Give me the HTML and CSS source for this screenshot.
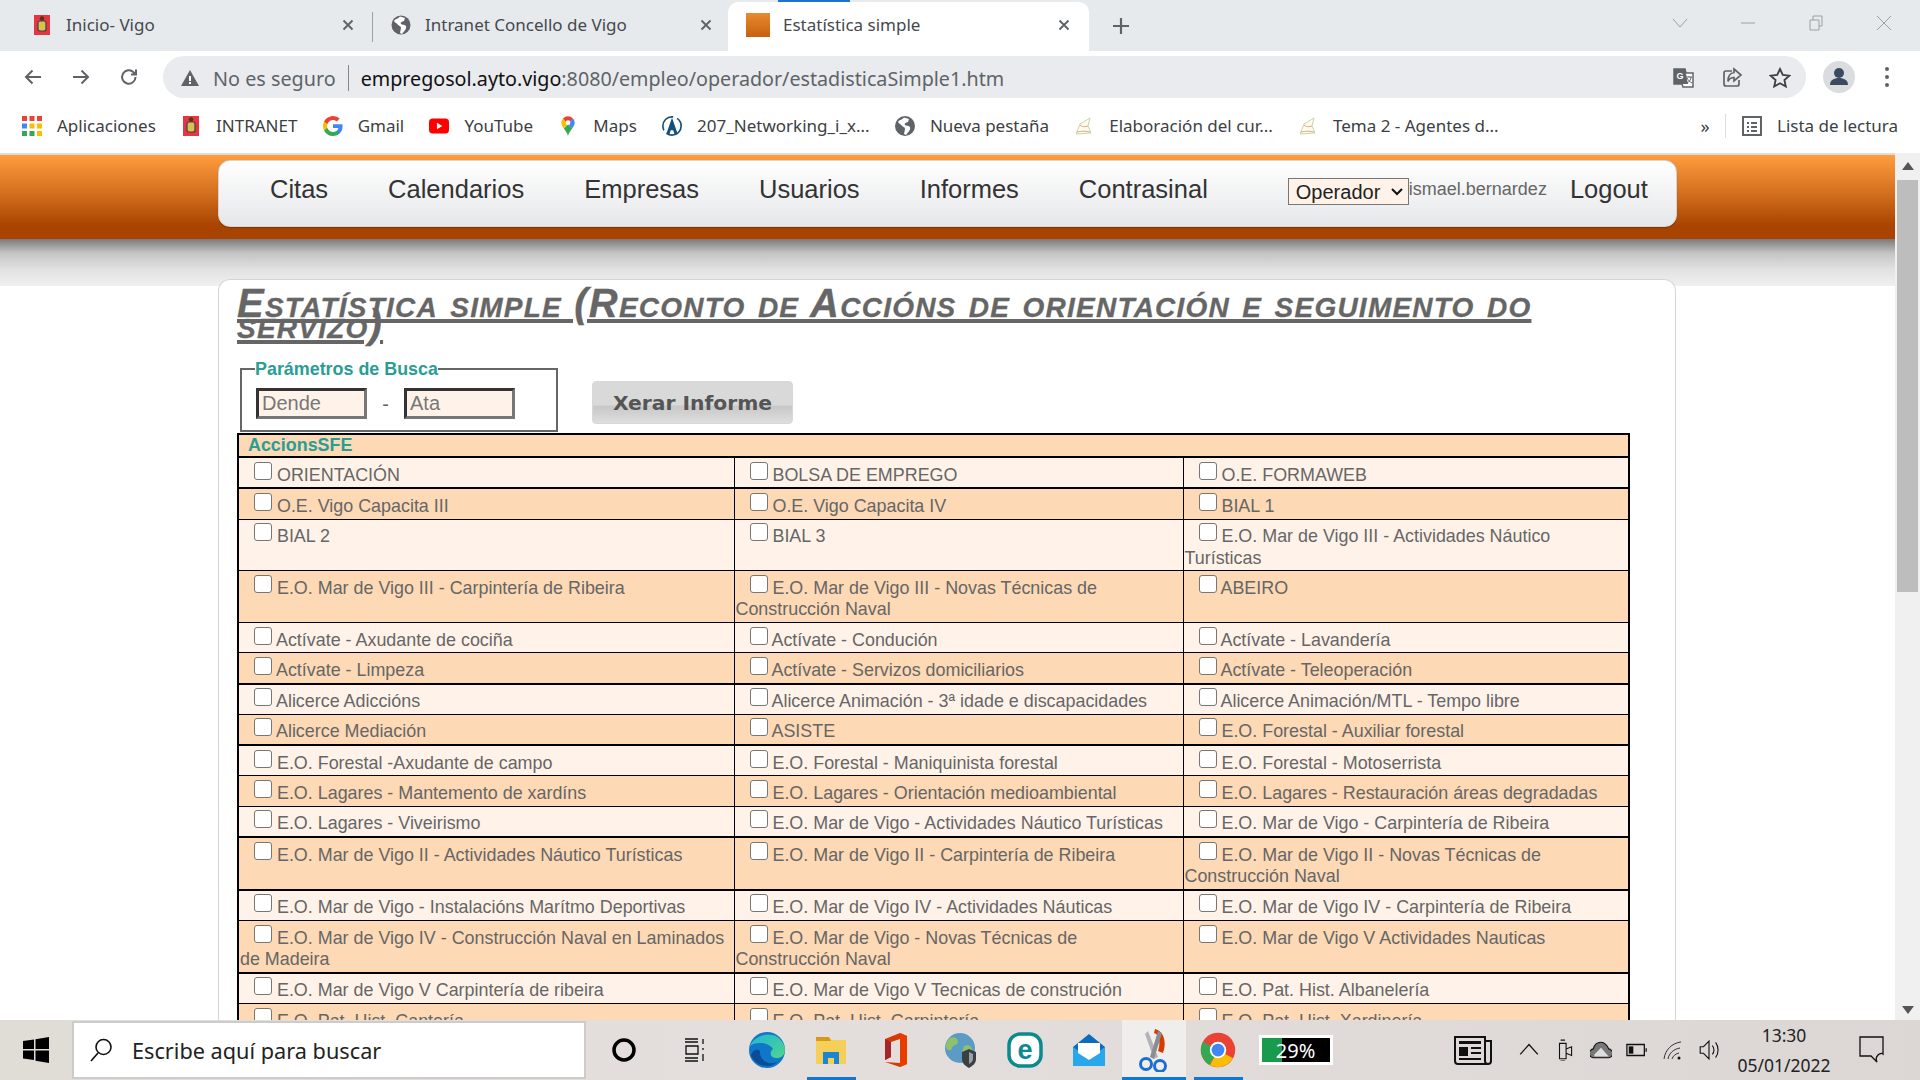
FILE: index.html
```html
<!DOCTYPE html>
<html lang="gl">
<head>
<meta charset="utf-8">
<title>Estatística simple</title>
<link rel="stylesheet" href="styles.css">
</head>
<body>
<div class="screen">
  <div class="tabs">
    <div class="tab">
      <svg class="fav" viewBox="0 0 20 20"><rect x="2" y="0" width="16" height="20" fill="#e8343f"/><rect x="6" y="6" width="8" height="10" rx="2" fill="#d9c24a" stroke="#345" stroke-width="1.2"/><circle cx="10" cy="3.5" r="2.2" fill="#532"/></svg>
      <span class="tab-title">Inicio- Vigo</span>
      <svg class="tab-x" viewBox="0 0 12 12"><path d="M1.5 1.5l9 9M10.5 1.5l-9 9"/></svg>
    </div>
    <div class="tab tab-sep">
      <svg class="fav" viewBox="0 0 20 20"><circle cx="10" cy="10" r="9.5" fill="#5f6368"/><path d="M9 1.5C7 4 4 4 3 6c1 2 3 2 4 4 1 1 3 1 3 3l-1 5 2 1c2-3 5-5 4-8-2-2-4-1-5-2-1-2 1-2 3-3l1-3z" fill="#fff"/></svg>
      <span class="tab-title">Intranet Concello de Vigo</span>
      <svg class="tab-x" viewBox="0 0 12 12"><path d="M1.5 1.5l9 9M10.5 1.5l-9 9"/></svg>
    </div>
    <div class="tab tab-on">
      <i class="tab-progress"></i>
      <svg class="fav fav-wide" viewBox="0 0 24 24"><defs><linearGradient id="og" x1="0" y1="0" x2="0" y2="1"><stop offset="0" stop-color="#e88a30"/><stop offset="1" stop-color="#c8600e"/></linearGradient></defs><rect width="24" height="24" fill="url(#og)"/></svg>
      <span class="tab-title">Estatística simple</span>
      <svg class="tab-x" viewBox="0 0 12 12"><path d="M1.5 1.5l9 9M10.5 1.5l-9 9"/></svg>
    </div>
    <svg class="newtab" viewBox="0 0 18 18"><path d="M9 1v16M1 9h16"/></svg>
    <div class="winctl">
      <svg viewBox="0 0 16 16"><path d="M1 4l7 8 7-8"/></svg>
      <svg viewBox="0 0 16 16"><path d="M1 8h14"/></svg>
      <svg viewBox="0 0 16 16"><path d="M2 5h9v10H2zM5 5V1h9v10h-3"/></svg>
      <svg viewBox="0 0 16 16"><path d="M1 1l14 14M15 1L1 15"/></svg>
    </div>
  </div>

  <div class="toolbar">
    <svg class="tool" viewBox="0 0 20 20"><path d="M18 10H3M9.5 3.5L3 10l6.500 6.500"/></svg>
    <svg class="tool" viewBox="0 0 20 20"><path d="M2 10h15M10.500 3.500L17 10l-6.500 6.500"/></svg>
    <svg class="tool" viewBox="0 0 20 20"><path d="M16.500 10a6.700 6.700 0 1 1-2-4.800L17 7.500M17 2.500v5h-5"/></svg>
    <div class="omni">
      <svg class="warn" viewBox="0 0 18 16"><path d="M9 0l9 16H0z" fill="#5f6368"/><path d="M8 6h2v5H8zM8 12h2v2H8z" fill="#fff"/></svg>
      <span class="insecure">No es seguro</span>
      <i class="omni-sep"></i>
      <span class="url"><b>empregosol.ayto.vigo</b>:8080/empleo/operador/estadisticaSimple1.htm</span>
      <span class="omni-icons">
        <svg viewBox="0 0 22 22"><path d="M1 2h11l1 4h7v14H10l-1-3H1z" fill="#fff" stroke="#5f6368" stroke-width="1.500"/><path d="M1 2h11l3 15H1z" fill="#5f6368"/><text x="3.500" y="12" class="g-mark">G</text><path d="M13 10h6M16 9v1M14 16c2-1 4-3 4-6M14 11c1 2 3 4 5 5" stroke="#5f6368" fill="none"/></svg>
        <svg viewBox="0 0 22 22"><path d="M11 4H5a2 2 0 0 0-2 2v11a2 2 0 0 0 2 2h11a2 2 0 0 0 2-2v-4M13 2l7 6-7 6v-3.500c-3 0-5 1.500-6 4 0-5 2-8.500 6-9z" fill="none" stroke="#5f6368" stroke-width="1.700"/></svg>
        <svg viewBox="0 0 22 22"><path d="M11 2l2.800 6 6.500.700-4.900 4.300 1.400 6.500-5.800-3.300-5.800 3.300 1.400-6.500L1.700 8.700 8.200 8z" fill="none" stroke="#3c4043" stroke-width="1.800"/></svg>
      </span>
    </div>
    <svg class="avatar" viewBox="0 0 32 32"><circle cx="16" cy="16" r="16" fill="#dadce0"/><circle cx="16" cy="12" r="5" fill="#3c4a60"/><path d="M7 24c0-5 4-7 9-7s9 2 9 7z" fill="#3c4a60"/></svg>
    <svg class="kebab" viewBox="0 0 6 22"><circle cx="3" cy="3" r="2"/><circle cx="3" cy="11" r="2"/><circle cx="3" cy="19" r="2"/></svg>
  </div>

  <div class="bookmarks">
    <span class="bm"><svg class="bi" viewBox="0 0 20 20"><path fill="#ea4335" d="M0 0h5v5H0zM7.500 0h5v5h-5zM15 0h5v5h-5z"/><path fill="#fbbc04" d="M15 7.500h5v5h-5zM7.500 7.500h5v5h-5z"/><path fill="#4285f4" d="M0 7.500h5v5H0z"/><path fill="#34a853" d="M0 15h5v5H0zM7.500 15h5v5h-5z"/><path fill="#fbbc04" d="M15 15h5v5h-5z"/></svg>Aplicaciones</span>
    <span class="bm"><svg class="bi" viewBox="0 0 20 20"><rect x="2" y="0" width="16" height="20" fill="#e8343f"/><rect x="6" y="6" width="8" height="10" rx="2" fill="#d9c24a" stroke="#345" stroke-width="1.200"/><circle cx="10" cy="3.500" r="2.200" fill="#532"/></svg>INTRANET</span>
    <span class="bm"><svg class="bi" viewBox="0 0 20 20"><path fill="#4285f4" d="M19.600 10.200c0-.7-.1-1.400-.2-2H10v3.800h5.400a4.600 4.600 0 0 1-2 3v2.500h3.200c1.900-1.700 3-4.300 3-7.300z"/><path fill="#34a853" d="M10 20c2.700 0 5-.9 6.600-2.500l-3.200-2.500c-.9.600-2 1-3.400 1-2.600 0-4.800-1.800-5.600-4.100H1.100v2.600A10 10 0 0 0 10 20z"/><path fill="#fbbc04" d="M4.400 11.900a6 6 0 0 1 0-3.800V5.500H1.100a10 10 0 0 0 0 9z"/><path fill="#ea4335" d="M10 4c1.500 0 2.800.5 3.800 1.500l2.900-2.900A10 10 0 0 0 1.100 5.500l3.300 2.600C5.200 5.800 7.400 4 10 4z"/></svg>Gmail</span>
    <span class="bm"><svg class="bi bi-yt" viewBox="0 0 24 18"><rect width="24" height="18" rx="4.500" fill="#f00"/><path d="M9.500 5l6.500 4-6.500 4z" fill="#fff"/></svg>YouTube</span>
    <span class="bm"><svg class="bi" viewBox="0 0 16 24"><path fill="#34a853" d="M8 24c-1-4-3-6-5-9l5-5 5 5c-2 3-4 5-5 9z"/><path fill="#fbbc04" d="M3 15C1 12 0 10 0 8c0-2 1-4 2-5l6 7z"/><path fill="#4285f4" d="M13 15c2-3 3-5 3-7 0-2-1-4-2-5L8 10z"/><path fill="#ea4335" d="M2 3a8 8 0 0 1 12 0L8 10z"/><circle cx="8" cy="8" r="2.800" fill="#fff"/></svg>Maps</span>
    <span class="bm"><svg class="bi" viewBox="0 0 24 24"><circle cx="12" cy="12" r="11" fill="none" stroke="#14507c" stroke-width="2" stroke-dasharray="24 5"/><path d="M12 2l7 20h-4l-1.500-5h-3L9 22H5z" fill="#14507c"/></svg>207_Networking_i_x...</span>
    <span class="bm"><svg class="bi" viewBox="0 0 20 20"><circle cx="10" cy="10" r="10" fill="#5f6368"/><path d="M9 1.500C7 4 4 4 3 6c1 2 3 2 4 4 1 1 3 1 3 3l-1 5 2 1c2-3 5-5 4-8-2-2-4-1-5-2-1-2 1-2 3-3l1-3z" fill="#fff"/></svg>Nueva pestaña</span>
    <span class="bm"><svg class="bi" viewBox="0 0 20 20"><path d="M2 18L6 8l10-6-2 8 3 7z" fill="#fbfbf2" stroke="#c9d6a8"/><path d="M3 16c4-1 9-1 13 0M6 9c2 2 5 2 8 1" stroke="#e8a878" fill="none"/></svg>Elaboración del cur...</span>
    <span class="bm"><svg class="bi" viewBox="0 0 20 20"><path d="M2 18L6 8l10-6-2 8 3 7z" fill="#fbfbf2" stroke="#c9d6a8"/><path d="M3 16c4-1 9-1 13 0M6 9c2 2 5 2 8 1" stroke="#e8a878" fill="none"/></svg>Tema 2 - Agentes d...</span>
    <span class="bm-more">»</span>
    <i class="bm-sep"></i>
    <span class="bm bm-read"><svg class="bi" viewBox="0 0 20 20"><rect x="1" y="1" width="18" height="18" fill="none" stroke="#5f6368" stroke-width="2"/><path d="M5 6h2v2H5zM9 6h6v2H9zM5 10h2v2H5zM9 10h6v2H9zM5 14h2v2H5zM9 14h6v2H9z" fill="#5f6368"/></svg>Lista de lectura</span>
  </div>

  <div class="viewport">
    <div class="content">
      <div class="hdr">
        <nav class="nav">
          <a>Citas</a><a>Calendarios</a><a>Empresas</a><a>Usuarios</a><a>Informes</a><a>Contrasinal</a>
          <select class="role"><option>Operador</option></select>
          <span class="user">ismael.bernardez</span>
          <a class="logout">Logout</a>
        </nav>
      </div>
      <div class="shade"></div>
      <main class="panel">
        <h1 class="title">Estatística simple (Reconto de Accións de orientación e seguimento do servizo)</h1>
        <div class="search">
          <fieldset class="params">
            <legend>Parámetros de Busca</legend>
            <input class="field" placeholder="Dende">
            <span class="dash">-</span>
            <input class="field" placeholder="Ata">
          </fieldset>
          <button class="gen">Xerar Informe</button>
        </div>
        <table class="grid">
          <colgroup><col class="c1"><col class="c2"><col class="c3"></colgroup>
          <tr class="band t"><th colspan="3">AccionsSFE</th></tr>
          <tr class="t"><td><label><input type="checkbox"> ORIENTACIÓN</label></td><td><label><input type="checkbox"> BOLSA DE EMPREGO</label></td><td><label><input type="checkbox"> O.E. FORMAWEB</label></td></tr>
          <tr class="band"><td><label><input type="checkbox"> O.E. Vigo Capacita III</label></td><td><label><input type="checkbox"> O.E. Vigo Capacita IV</label></td><td><label><input type="checkbox"> BIAL 1</label></td></tr>
          <tr><td><label><input type="checkbox"> BIAL 2</label></td><td><label><input type="checkbox"> BIAL 3</label></td><td><label><input type="checkbox"> E.O. Mar de Vigo III - Actividades Náutico Turísticas</label></td></tr>
          <tr class="band"><td><label><input type="checkbox"> E.O. Mar de Vigo III - Carpintería de Ribeira</label></td><td><label><input type="checkbox"> E.O. Mar de Vigo III - Novas Técnicas de Construcción Naval</label></td><td><label><input type="checkbox"> ABEIRO</label></td></tr>
          <tr><td><label><input type="checkbox"> Actívate - Axudante de cociña</label></td><td><label><input type="checkbox"> Actívate - Condución</label></td><td><label><input type="checkbox"> Actívate - Lavandería</label></td></tr>
          <tr class="band t"><td><label><input type="checkbox"> Actívate - Limpeza</label></td><td><label><input type="checkbox"> Actívate - Servizos domiciliarios</label></td><td><label><input type="checkbox"> Actívate - Teleoperación</label></td></tr>
          <tr><td><label><input type="checkbox"> Alicerce Adiccións</label></td><td><label><input type="checkbox"> Alicerce Animación - 3ª idade e discapacidades</label></td><td><label><input type="checkbox"> Alicerce Animación/MTL - Tempo libre</label></td></tr>
          <tr class="band t"><td><label><input type="checkbox"> Alicerce Mediación</label></td><td><label><input type="checkbox"> ASISTE</label></td><td><label><input type="checkbox"> E.O. Forestal - Auxiliar forestal</label></td></tr>
          <tr><td><label><input type="checkbox"> E.O. Forestal -Axudante de campo</label></td><td><label><input type="checkbox"> E.O. Forestal - Maniquinista forestal</label></td><td><label><input type="checkbox"> E.O. Forestal - Motoserrista</label></td></tr>
          <tr class="band"><td><label><input type="checkbox"> E.O. Lagares - Mantemento de xardíns</label></td><td><label><input type="checkbox"> E.O. Lagares - Orientación medioambiental</label></td><td><label><input type="checkbox"> E.O. Lagares - Restauración áreas degradadas</label></td></tr>
          <tr class="t"><td><label><input type="checkbox"> E.O. Lagares - Viveirismo</label></td><td><label><input type="checkbox"> E.O. Mar de Vigo - Actividades Náutico Turísticas</label></td><td><label><input type="checkbox"> E.O. Mar de Vigo - Carpintería de Ribeira</label></td></tr>
          <tr class="band t"><td><label><input type="checkbox"> E.O. Mar de Vigo II - Actividades Náutico Turísticas</label></td><td><label><input type="checkbox"> E.O. Mar de Vigo II - Carpintería de Ribeira</label></td><td><label><input type="checkbox"> E.O. Mar de Vigo II - Novas Técnicas de Construcción Naval</label></td></tr>
          <tr><td><label><input type="checkbox"> E.O. Mar de Vigo - Instalacións Marítmo Deportivas</label></td><td><label><input type="checkbox"> E.O. Mar de Vigo IV - Actividades Náuticas</label></td><td><label><input type="checkbox"> E.O. Mar de Vigo IV - Carpintería de Ribeira</label></td></tr>
          <tr class="band t"><td><label><input type="checkbox"> E.O. Mar de Vigo IV - Construcción Naval en Laminados de Madeira</label></td><td><label><input type="checkbox"> E.O. Mar de Vigo - Novas Técnicas de Construcción Naval</label></td><td><label><input type="checkbox"> E.O. Mar de Vigo V Actividades Nauticas</label></td></tr>
          <tr><td><label><input type="checkbox"> E.O. Mar de Vigo V Carpintería de ribeira</label></td><td><label><input type="checkbox"> E.O. Mar de Vigo V Tecnicas de construción</label></td><td><label><input type="checkbox"> E.O. Pat. Hist. Albanelería</label></td></tr>
          <tr class="band"><td><label><input type="checkbox"> E.O. Pat. Hist. Cantería</label></td><td><label><input type="checkbox"> E.O. Pat. Hist. Carpintería</label></td><td><label><input type="checkbox"> E.O. Pat. Hist. Xardinería</label></td></tr>
        </table>
      </main>
    </div>
    <div class="scrollbar">
      <svg class="arrow" viewBox="0 0 12 8"><path d="M6 0l6 8H0z"/></svg>
      <div class="thumb"></div>
      <svg class="arrow" viewBox="0 0 12 8"><path d="M6 8l6-8H0z"/></svg>
    </div>
  </div>

  <footer class="taskbar">
    <svg class="start" viewBox="0 0 26 26"><path d="M0 4l11-1.500V12H0zM12.500 2.300L26 0v12H12.500zM0 13.500h11V23L0 21.500zM12.500 13.500H26V26l-13.500-2.200z" fill="#000"/></svg>
    <div class="search-box">
      <svg viewBox="0 0 24 24"><circle cx="14.500" cy="9" r="7.500" fill="none" stroke="#111" stroke-width="1.600"/><path d="M9 15l-7 8" stroke="#111" stroke-width="1.600"/></svg>
      <span>Escribe aquí para buscar</span>
    </div>
    <div class="apps">
      <span class="app app-sm app-cortana"><svg viewBox="0 0 24 24"><circle cx="12" cy="12" r="10" fill="none" stroke="#000" stroke-width="3.500"/></svg></span>
      <span class="app app-sm"><svg viewBox="0 0 24 24"><path d="M2 1h13M2 4h13M2 20h13M2 23h13M3 8h12v8H3zM20 1v5M20 10v2M20 16v7" fill="none" stroke="#111" stroke-width="1.300"/></svg></span>
      <span class="app app-edge"><svg viewBox="0 0 36 36"><defs><linearGradient id="eg" x1="0" y1="0" x2="1" y2="1"><stop offset="0" stop-color="#1fb6d8"/><stop offset="1" stop-color="#52d58a"/></linearGradient></defs><circle cx="18" cy="18" r="18" fill="#0f76c8"/><path d="M1 14C5 2 28-4 35 13c3 9-2 14-9 13-6-1-5-7-2-9-4-7-18-8-23-3z" fill="url(#eg)"/><path d="M11 19c-1 9 8 15 17 11-7 7-20 5-26-6 1-5 5-8 9-5z" fill="#0a4d96"/></svg></span>
      <span class="app bar"><svg viewBox="0 0 36 36"><path d="M3 5h13l3 3h14v24H3z" fill="#f6ce5a"/><path d="M3 5h13l2 4H3z" fill="#d79a18"/><path d="M10 32V20h16v12h-5v-6h-6v6z" fill="#1a86d0"/></svg></span>
      <span class="app"><svg viewBox="0 0 36 36"><path d="M7 7l15-6 7 3v28l-7 3-15-5 15 1V7l-9 3v15l-6 3z" fill="#d83b01"/><path d="M22 1l7 3v28l-7 3z" fill="#eb3c00"/><path d="M7 7v21l6-3V10z" fill="#a4262c"/></svg></span>
      <span class="app"><svg viewBox="0 0 36 36"><circle cx="18" cy="16" r="15" fill="#5b9bc4"/><path d="M8 6c4-2 8 0 8 4s-5 2-6 6-5 2-6 0 1-8 4-10zM22 14c4-2 8 0 8 4l-6 6-4-4z" fill="#8fc06c"/><path d="M20 20l7-3 7 3v7c0 5-4 7-7 9-3-2-7-4-7-9z" fill="#3a3f44"/><path d="M27 20l4 2v5c0 2-2 4-4 5z" fill="#9aa0a6"/></svg></span>
      <span class="app"><svg viewBox="0 0 36 36"><rect x="2" y="2" width="32" height="32" rx="11" fill="#fff" stroke="#0a8a8f" stroke-width="3.500"/><text x="18" y="27" class="eset">e</text></svg></span>
      <span class="app"><svg viewBox="0 0 36 36"><path d="M18 2l16 13v19H2V15z" fill="#0f6cbd"/><path d="M2 15l16 11 16-11v19H2z" fill="#28a8ea"/><path d="M7 11h22v10l-11 7-11-7z" fill="#fff"/></svg></span>
      <span class="app app-active"><svg viewBox="0 0 36 44"><path d="M19 1c9 2 12 14 8 24l-5-2c3-8 1-17-4-18z" fill="#d83b01"/><path d="M12 3l10 26-4 2L9 6z" fill="#b0b4b8"/><path d="M22 3l-8 26 4 2 8-26z" fill="#8a8e92"/><circle cx="10" cy="36" r="5.500" fill="none" stroke="#1a6fd0" stroke-width="3"/><circle cx="24" cy="38" r="5.500" fill="none" stroke="#1a6fd0" stroke-width="3"/></svg></span>
      <span class="app bar"><svg viewBox="0 0 48 48"><circle cx="24" cy="24" r="23" fill="#ea4335"/><path d="M24 24L44 35A23 23 0 0 1 13 44z" fill="#fbbc04"/><path d="M24 24L13 44A23 23 0 0 1 4 13z" fill="#34a853"/><circle cx="24" cy="24" r="11" fill="#fff"/><circle cx="24" cy="24" r="8.500" fill="#4285f4"/></svg></span>
      <span class="batt"><i class="batt-fill"></i><span class="batt-txt">29%</span></span>
    </div>
    <div class="tray">
      <svg class="tr-news" viewBox="0 0 38 30"><path d="M1 2h30v24a3 3 0 0 0 3 3H4a3 3 0 0 1-3-3zM31 6h6v20a3 3 0 0 1-3 3" fill="none" stroke="#111" stroke-width="2"/><path d="M5 6h22v3H5zM5 12h9v9H5zM17 12h10v2H17zM17 17h10v2H17zM5 23h22v2H5z" fill="#111"/></svg>
      <svg class="tr" viewBox="0 0 20 20"><path d="M2 14l8-9 8 9" fill="none" stroke="#111" stroke-width="1.200"/></svg>
      <svg class="tr" viewBox="0 0 20 20"><path d="M5 4h6v14H5zM11 9l5-2v8l-5-2M6 1h4M6 20h4" fill="none" stroke="#111"/></svg>
      <svg class="tr" viewBox="0 0 20 20"><path d="M4 17a4 4 0 0 1-1-8c1-4 4-6 7-6s6 3 7 6a4 4 0 0 1-1 8z" fill="#777" stroke="#111"/><path d="M4 14l6-6 7 8H4z" fill="#ddd"/></svg>
      <svg class="tr" viewBox="0 0 24 20"><path d="M1 4h19v12H1zM22 8v4" fill="none" stroke="#111" stroke-width="1.400"/><path d="M3 6h5v8H3z" fill="#111"/></svg>
      <svg class="tr" viewBox="0 0 22 20"><path d="M2 19C3 10 10 3 19 2M6 19c1-6 6-10 12-11M10 19c1-3 3-5 7-6" fill="none" stroke="#333"/><circle cx="17" cy="18" r="1.500" fill="#111"/></svg>
      <svg class="tr" viewBox="0 0 20 20"><path d="M2 7h3l5-5v16l-5-5H2zM13 6c2 2 2 6 0 8M16 3c3 4 3 10 0 14" fill="none" stroke="#111"/></svg>
    </div>
    <div class="clock"><span>13:30</span><span>05/01/2022</span></div>
    <svg class="notif" viewBox="0 0 26 28"><path d="M1 1h23v17c0 0-2-2-5 1s-1 7-1 7L12 20H1z" fill="none" stroke="#111" stroke-width="1.300"/></svg>
  </footer>
</div>
</body>
</html>
```
FILE: styles.css
```css
* { box-sizing: border-box; }
html, body { margin: 0; padding: 0; height: 100%; overflow: hidden; }
.screen { width: 1920px; height: 1080px; display: flex; flex-direction: column; overflow: hidden; font-family: "Liberation Sans", Arial, sans-serif; background: #fff; }

/* browser chrome */
.tabs { height: 51px; flex: none; background: #e7eaed; display: flex; align-items: flex-end; font-family: "Noto Sans", sans-serif; }
.tab { position: relative; width: 364px; height: 49px; display: flex; align-items: center; padding: 0 0 4px 32px; font-size: 17px; color: #45494e; }
.tab-sep { width: 365px; padding-left: 27px; }
.tab-sep::before { content: ""; position: absolute; left: 8px; top: 10px; width: 1px; height: 30px; background: #9aa0a6; }
.fav { width: 20px; height: 24px; flex: none; margin-right: 14px; }
.fav-wide { width: 24px; height: 24px; margin-right: 13px; }
.tab-title { flex: 1; white-space: nowrap; }
.tab-x { width: 12px; height: 12px; flex: none; margin-right: 10px; fill: none; stroke: #5f6368; stroke-width: 1.900; }
.tab-sep .tab-x { margin-right: 17px; }
.tab-on { width: 361px; background: #fff; border-radius: 10px 10px 0 0; padding-left: 18px; margin-left: -1px; }
.tab-progress { position: absolute; left: 50px; top: -2px; width: 72px; height: 2px; background: #1a73d0; }
.tab-on .tab-x { margin-right: 19px; }
.newtab { width: 18px; height: 18px; margin: 0 0 16px 23px; fill: none; stroke: #5f6368; stroke-width: 2.200; flex: none; }
.winctl { margin-left: auto; align-self: flex-start; display: flex; gap: 52px; padding: 15px 28px 0 0; }
.winctl svg { width: 16px; height: 16px; fill: none; stroke: #9aa0a6; stroke-width: 1; }

.toolbar { height: 52px; flex: none; background: #fff; display: flex; align-items: center; padding: 0 20px 0 23px; gap: 28px; font-family: "Noto Sans", sans-serif; }
.tool { width: 20px; height: 20px; flex: none; fill: none; stroke: #5f6368; stroke-width: 2; }
.omni { margin-left: -4px; width: 1643px; height: 42px; background: #e9ebee; border-radius: 21px; display: flex; align-items: center; padding: 2px 15px 0 18px; color: #5f6368; flex: none; }
.warn { width: 18px; height: 16px; flex: none; margin-right: 14px; }
.insecure { font-size: 19.800px; white-space: nowrap; }
.omni-sep { width: 1px; height: 26px; background: #80868b; margin: 0 12px; flex: none; }
.url { white-space: nowrap; font-size: 19.700px; }
.url b { font-weight: 400; color: #111; }
.omni-icons { margin-left: auto; display: flex; gap: 26px; }
.omni-icons svg { width: 22px; height: 22px; }
.g-mark { font: bold 9px "Liberation Sans", sans-serif; fill: #fff; }
.avatar { width: 32px; height: 32px; flex: none; margin-left: -11px; }
.kebab { width: 6px; height: 22px; flex: none; fill: #5f6368; margin-left: 1px; }

.bookmarks { height: 50px; flex: none; background: #fff; display: flex; align-items: center; padding: 0 22px 5px 22px; gap: 25.200px; font: 17px "Noto Sans", sans-serif; color: #3c4043; }
.bm { display: flex; align-items: center; gap: 15px; white-space: nowrap; }
.bi { width: 20px; height: 20px; flex: none; }
.bm-more { margin-left: auto; margin-right: -3px; font-size: 18px; }
.bm-sep { width: 1px; height: 24px; background: #dadce0; margin: 0 -9px 0 -7px; }

/* web page */
.viewport { flex: 1; min-height: 0; display: flex; background: #fff; }
.content { flex: 1; min-width: 0; overflow: hidden; border-top: 2px solid #ddd; }
.hdr { height: 84px; background: linear-gradient(#ff9c3e, #d4701e 45%, #a84300 85%, #a84300); padding-top: 5px; }
.nav { width: 1459px; height: 67px; margin-left: 218px; display: flex; align-items: flex-start; padding: 13px 0 0 51px; background: linear-gradient(#fff, #e6e7e9); border: 1px solid #d5d5d5; border-radius: 12px; gap: 60px; font-size: 25.500px; line-height: 30px; color: #333; box-shadow: 0 1px 1px rgba(0,0,0,.25); }
.role { appearance: none; margin: 4px 0 0 20px; width: 121px; height: 27px; background: #fff3e9 url("data:image/svg+xml,%3Csvg xmlns='http://www.w3.org/2000/svg' width='12' height='8'%3E%3Cpath d='M1 1l5 5 5-5' fill='none' stroke='%23111' stroke-width='2'/%3E%3C/svg%3E") no-repeat right 5px center; border: 1px solid #777; font: 20px "Liberation Sans", sans-serif; color: #222; border-radius: 0; padding: 0 0 0 7px; }
.user { margin-left: -60px; margin-top: 4px; font-size: 18px; line-height: 22px; color: #666; white-space: nowrap; }
.logout { margin-left: -37px; }
.shade { height: 47px; background: linear-gradient(#7a7a7a, #c4c4c4 30%, #e2e2e2 65%, #f0f0f0); }
.panel { position: relative; width: 1458px; margin: -7px 0 0 218px; background: #fff; border: 1px solid #d5d5d5; border-bottom: 0; border-radius: 12px 12px 0 0; padding: 0 17px 0 18px; height: 900px; }
.title { margin: 13px 0 0; font: italic bold 40px/21px "Liberation Sans", sans-serif; font-variant: small-caps; letter-spacing: 1.230px; color: #666; text-decoration: underline; -webkit-text-stroke: .3px #666; }
.search { display: flex; align-items: flex-start; margin-top: 24px; }
.params { width: 318px; height: 73px; margin: 0 0 0 3px; padding: 9px 0 0 14px; border: 2px solid #666; display: flex; align-items: flex-start; }
.params legend { padding: 0; margin-left: -1px; font-size: 17.900px; font-weight: bold; color: #2a9d94; line-height: 20px; }
.field { width: 111px; height: 31px; background: #fff3e9; border-style: solid; border-width: 3px; border-color: #333 #777 #777 #333; padding: 0 3px; font: 20px "Liberation Sans", sans-serif; }
.field::placeholder { color: #777; }
.dash { width: 37px; text-align: center; font-size: 20px; color: #666; line-height: 32px; }
.gen { margin: 22px 0 0 34px; width: 201px; height: 43px; border: 1px solid #d8d8d8; border-radius: 4px; background: linear-gradient(#d9d9d9 55%, #c8c8c8 60%, #dedede); font: bold 20.300px "DejaVu Sans", sans-serif; color: #555; padding: 0; }
.grid { width: 1391px; table-layout: fixed; border-collapse: collapse; margin-top: 1px; border: 2px solid #000; font-size: 17.900px; color: #666; background: #fff3e9; }
.c1 { width: 496px; }
.c2 { width: 449px; }
.c3 { width: 446px; }
.grid tr { border-bottom: 1px solid #000; }
.grid tr.t { border-bottom: 2px solid #000; }
.grid tr.band { background: #fdd9b5; }
.grid td { padding: 0 1px 1.400px; border-left: 1px solid #000; vertical-align: top; line-height: 21.400px; }
.grid th { padding: 0 0 0 9px; text-align: left; font-size: 17.900px; color: #2a9d94; line-height: 21px; }
.grid input[type=checkbox] { appearance: none; width: 18px; height: 18px; margin: 3.500px 0 1px 14px; background: #fff; border: 1.500px solid #777; border-radius: 3px; }

.scrollbar { width: 25px; flex: none; background: #f0f0f0; display: flex; flex-direction: column; align-items: center; padding: 9px 0 6px; }
.arrow { width: 12px; height: 8px; flex: none; fill: #555; }
.thumb { width: 21px; height: 412px; flex: none; background: #bdbdbd; margin: 10px 0 auto; }

/* taskbar */
.taskbar { height: 60px; flex: none; background: linear-gradient(90deg, #e0dcd6, #e4dfdd 40%, #dcd7d4); display: flex; align-items: center; font-family: "Noto Sans", sans-serif; }
.start { width: 26px; height: 26px; margin: 0 23px; flex: none; }
.search-box { width: 514px; height: 58px; background: #fff; border: 2px solid #ccc; display: flex; align-items: center; padding-left: 15px; gap: 19px; font-size: 21.700px; color: #222; flex: none; }
.search-box svg { width: 24px; height: 26px; flex: none; }
.apps { display: flex; align-items: center; height: 60px; margin-left: 2px; }
.app { position: relative; width: 64.500px; height: 60px; display: flex; align-items: center; justify-content: center; flex: none; }
.app svg { width: 36px; height: 36px; }
.app-sm { width: 71.500px; }
.app-sm svg { width: 24px; height: 24px; }
.app-edge { margin-left: 3.500px; }
.bar::after { content: ""; position: absolute; left: 8px; right: 8px; bottom: 0; height: 3px; background: #0f78d4; }
.app-active { background: #f0eeec; box-shadow: inset 0 -3px 0 #0f78d4; }
.app-active svg { height: 44px; }
.eset { font: bold 27px "Liberation Sans", sans-serif; fill: #0a8a8f; text-anchor: middle; }
.batt { position: relative; width: 74px; height: 30px; border: 3px solid #fff; background: #000; margin-left: 8px; flex: none; color: #fff; font-size: 20px; display: flex; align-items: center; justify-content: center; }
.batt-fill { position: absolute; left: 0; top: 0; bottom: 0; width: 20px; background: #1a9a4c; }
.batt-txt { position: relative; }
.tray { margin-left: auto; display: flex; align-items: center; gap: 14px; }
.tr-news { width: 38px; height: 30px; margin-right: 12px; }
.tr { width: 22px; height: 22px; }
.clock { width: 110px; margin-left: 9px; display: flex; flex-direction: column; align-items: center; gap: 9px; font-size: 17.500px; line-height: 21px; color: #222; }
.notif { width: 26px; height: 28px; margin: 0 35px 0 20px; flex: none; }
```
